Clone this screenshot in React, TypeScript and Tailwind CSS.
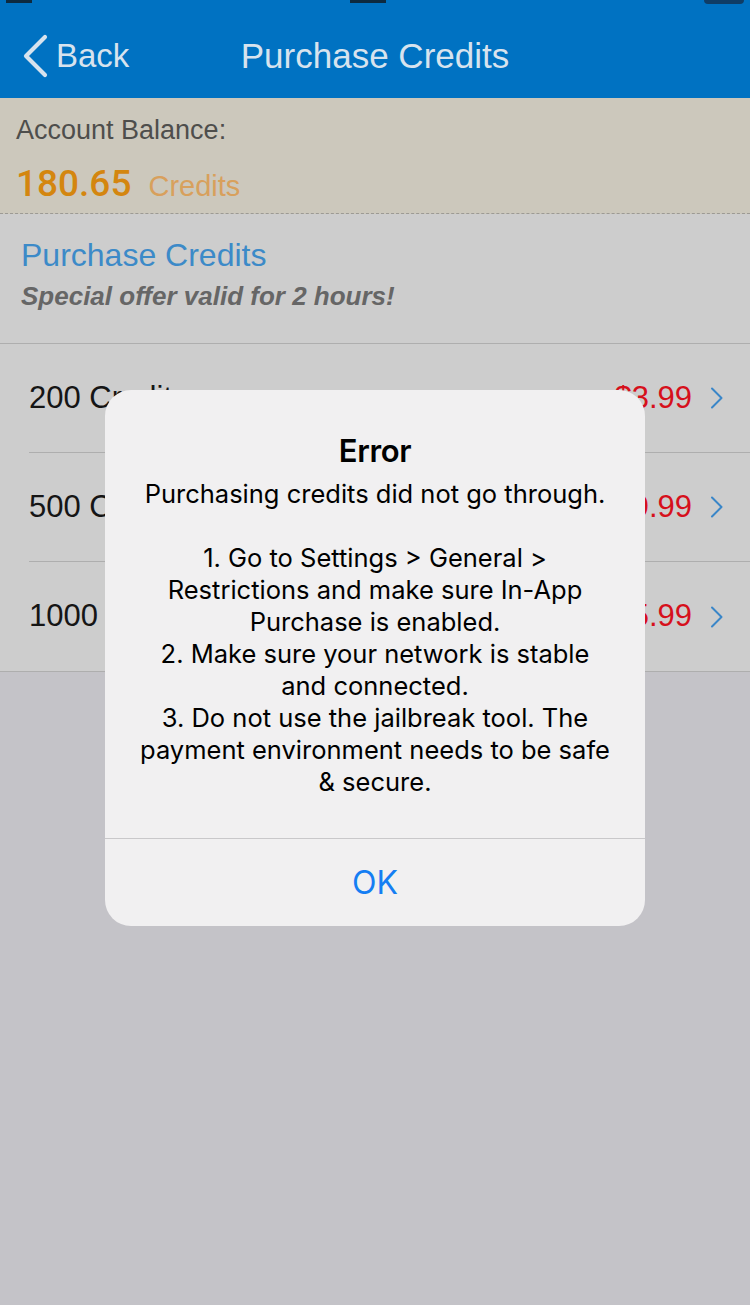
const packs = [
  { label: "200 Credits", price: "$3.99" },
  { label: "500 Credits", price: "$9.99" },
  { label: "1000 Credits", price: "$15.99" },
];

const message = [
  "Purchasing credits did not go through.",
  "",
  "1. Go to Settings > General >",
  "Restrictions and make sure In-App",
  "Purchase is enabled.",
  "2. Make sure your network is stable",
  "and connected.",
  "3. Do not use the jailbreak tool. The",
  "payment environment needs to be safe",
  "& secure.",
];

function NavBar() {
  return (
    <header className="relative h-[98px] bg-[#0072c2] text-[#d7e3ee]">
      <div className="flex h-[5px] items-start justify-between px-[6px]">
        <span className="h-[3px] w-[26px] bg-[#0d2a40]" />
        <span className="h-[3px] w-[36px] bg-[#0d2a40]" />
        <span className="h-[4px] w-[40px] rounded-b-sm bg-[#0f3d66]" />
      </div>
      <div className="flex h-[93px] items-center pt-[7px]">
        <a href="#" className="flex items-center gap-[8px] pl-[22px]">
          <svg width="26" height="44" viewBox="0 0 26 44" fill="none" className="mt-[2px]">
            <path d="M23 3 L4 22 L23 41" stroke="currentColor" strokeWidth="4.2" strokeLinecap="round" strokeLinejoin="round" />
          </svg>
          <span className="text-[33px] leading-none">Back</span>
        </a>
        <h1 className="absolute left-1/2 -translate-x-1/2 text-[35px] font-medium leading-none whitespace-nowrap">
          Purchase Credits
        </h1>
      </div>
    </header>
  );
}

function Balance() {
  return (
    <section className="h-[116px] border-b border-dashed border-[#9c9a94] bg-[#ccc8bc] px-4 pt-[16px]">
      <div className="text-[27px] leading-[32px] text-[#4e4e4c]">Account Balance:</div>
      <div className="mt-[19px] flex items-baseline gap-[17px]">
        <span
          className="text-[37px] leading-none font-medium text-[#d4860f]"
          style={{ fontFamily: 'Roboto, "Liberation Sans", sans-serif' }}
        >
          180.65
        </span>
        <span className="text-[29px] leading-none text-[#d8a05c]">Credits</span>
      </div>
    </section>
  );
}

export default function App() {
  return (
    <div
      className="relative h-[1305px] w-[750px] overflow-hidden bg-[#c4c3c8]"
      style={{ fontFamily: '"Liberation Sans", Arial, sans-serif' }}
    >
      <NavBar />
      <Balance />

      <section className="border-b border-[#aeaeae] bg-[#cdcdcd] px-[21px] pt-[21px] pb-[32px]">
        <h2 className="text-[32px] leading-[40px] text-[#3c8ac8]">Purchase Credits</h2>
        <p className="mt-[6px] text-[26px] leading-[30px] font-bold italic text-[#666666]">
          Special offer valid for 2 hours!
        </p>
      </section>

      <ul className="bg-[#cdcdcd]">
        {packs.map((p, i) => (
          <li
            key={p.label}
            className={
              i === packs.length - 1
                ? "border-b border-[#aeaeae] pl-[29px]"
                : "pl-[29px]"
            }
          >
            <div
              className={
                i === packs.length - 1
                  ? "flex h-[109px] items-center pr-[26px]"
                  : "flex h-[109px] items-center border-b border-[#aeaeae] pr-[26px]"
              }
            >
              <span className="flex-1 text-[31px] text-[#151515]">{p.label}</span>
              <span className="text-[31px] text-[#d6101b]">{p.price}</span>
              <svg width="14" height="22" viewBox="0 0 14 22" fill="none" className="ml-[18px]">
                <path d="M2 1.5 L11.5 11 L2 20.5" stroke="#3a86c8" strokeWidth="2" strokeLinecap="round" strokeLinejoin="round" />
              </svg>
            </div>
          </li>
        ))}
      </ul>

      <div className="absolute inset-0 flex justify-center pt-[390px]">
        <div
          className="h-[536px] w-[540px] overflow-hidden rounded-[26px] bg-[#f1f0f1] text-center text-black"
          style={{ fontFamily: 'Inter, "Liberation Sans", sans-serif' }}
        >
          <div className="h-[448px] pt-[41px]">
            <h3 className="text-[31px] leading-[40px] font-semibold tracking-[-0.3px]">Error</h3>
            <div className="mt-[7px] text-[25.5px] leading-[32px]">
              {message.map((line, i) => (
                <div key={i} className="h-[32px] whitespace-nowrap">
                  {line}
                </div>
              ))}
            </div>
          </div>
          <button className="h-[88px] w-full border-t border-[#c9c8ca] text-[32px] text-[#157ef3]">
            OK
          </button>
        </div>
      </div>
    </div>
  );
}
